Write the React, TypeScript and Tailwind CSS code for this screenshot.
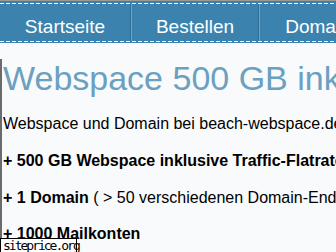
import React from "react";

const dash = "h-px w-full bg-[repeating-linear-gradient(90deg,#ffffff_0px,#ffffff_4px,transparent_4px,transparent_6px)]";

function NavItem({ label, w }: { label: string; w: string }) {
  return (
    <div className={`flex shrink-0 justify-center pt-[12px] text-[19px] leading-[22px] text-white ${w}`}>
      {label}
    </div>
  );
}

function Sep() {
  return (
    <div className="flex shrink-0 self-stretch">
      <div className="w-px bg-[#2f6f96]" />
      <div className="w-px bg-[#6aa6cb]" />
    </div>
  );
}

export default function App() {
  return (
    <div
      className="relative h-[252px] w-[336px] overflow-hidden bg-[#f8fafc]"
      style={{ fontFamily: '"Liberation Sans", Arial, sans-serif' }}
    >
      <div className="border-t border-[#9a9a9a] bg-[#3b83ae] pt-[2px] pb-px">
        <div className={dash} />
        <div className="flex h-[37px] whitespace-nowrap">
          <NavItem label="Startseite" w="w-[130px]" />
          <Sep />
          <NavItem label="Bestellen" w="w-[126px]" />
          <Sep />
          <NavItem label="Domain" w="w-[116px]" />
        </div>
        <div className={dash} />
      </div>
      <div className="h-[209px] border-l-2 border-[#6b6b6b] pl-px whitespace-nowrap text-black">
        <div className="mt-[16px] text-[34px] leading-[39px] text-[#6ba0c0]">Webspace 500 GB inklusive Domain</div>
        <p className="mt-[16px] text-[16px] leading-[19px]">Webspace und Domain bei beach-webspace.de</p>
        <p className="mt-[18px] text-[16px] leading-[19px] font-bold">+ 500 GB Webspace inklusive Traffic-Flatrate</p>
        <p className="mt-[18px] text-[16px] leading-[19px]">
          <span className="font-bold">+ 1 Domain</span> ( &gt; 50 verschiedenen Domain-Endungen )
        </p>
        <p className="mt-[17px] text-[16px] leading-[19px] font-bold">+ 1000 Mailkonten</p>
      </div>
      <div
        className="absolute left-0 top-[238px] h-[15px] w-[77px] border border-black bg-white pl-[2px] text-[13px] leading-[13px] tracking-[-2px] text-black"
        style={{ fontFamily: '"DejaVu Sans Mono", "Liberation Mono", monospace' }}
      >
        siteprice.org
      </div>
    </div>
  );
}
